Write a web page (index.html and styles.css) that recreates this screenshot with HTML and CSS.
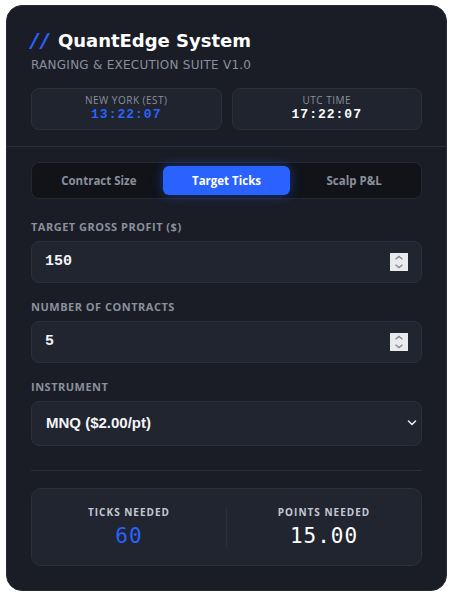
FILE: index.html
```html
<!DOCTYPE html>
<html lang="en">
<head>
<meta charset="utf-8">
<title>QuantEdge System</title>
<link rel="stylesheet" href="styles.css">
</head>
<body>
<div class="card">
  <header class="head">
    <h1 class="title"><span class="slash">//</span> QuantEdge System</h1>
    <p class="sub">RANGING &amp; EXECUTION SUITE V1.0</p>
    <div class="clocks">
      <div class="clock">
        <div class="clock-label">NEW YORK (EST)</div>
        <div class="clock-time blue">13:22:07</div>
      </div>
      <div class="clock">
        <div class="clock-label">UTC TIME</div>
        <div class="clock-time">17:22:07</div>
      </div>
    </div>
  </header>
  <main class="main">
    <div class="tabs">
      <button class="tab">Contract Size</button>
      <button class="tab active">Target Ticks</button>
      <button class="tab">Scalp P&amp;L</button>
    </div>

    <label class="field-label first" for="profit">TARGET GROSS PROFIT ($)</label>
    <div class="input-wrap">
      <input id="profit" class="field num" type="number" value="150">
      <svg class="spin" width="18" height="18" viewBox="0 0 18 18" aria-hidden="true"><rect width="18" height="18" fill="#e9e9ee"/><path d="M5.5 6.2 L9 3.4 L12.5 6.2 M5.5 11.8 L9 14.6 L12.5 11.8" fill="none" stroke="#878791" stroke-width="1.3"/></svg>
    </div>

    <label class="field-label" for="contracts">NUMBER OF CONTRACTS</label>
    <div class="input-wrap">
      <input id="contracts" class="field num" type="number" value="5">
      <svg class="spin" width="18" height="18" viewBox="0 0 18 18" aria-hidden="true"><rect width="18" height="18" fill="#e9e9ee"/><path d="M5.5 6.2 L9 3.4 L12.5 6.2 M5.5 11.8 L9 14.6 L12.5 11.8" fill="none" stroke="#878791" stroke-width="1.3"/></svg>
    </div>

    <label class="field-label" for="instrument">INSTRUMENT</label>
    <div class="select-wrap">
      <select id="instrument" class="field select">
        <option>MNQ ($2.00/pt)</option>
      </select>
      <svg class="chev" width="10" height="10" viewBox="0 0 10 10" aria-hidden="true"><path d="M1.5 3 L5 6.5 L8.5 3" fill="none" stroke="#e8eaf0" stroke-width="1.6" stroke-linecap="round" stroke-linejoin="round"/></svg>
    </div>

    <hr class="divider">

    <div class="results">
      <div class="res">
        <div class="res-label">TICKS NEEDED</div>
        <div class="res-value blue">60</div>
      </div>
      <div class="res-divider"></div>
      <div class="res">
        <div class="res-label">POINTS NEEDED</div>
        <div class="res-value">15.00</div>
      </div>
    </div>
  </main>
</div>
</body>
</html>
```

FILE: styles.css
```css
body {
  margin: 0;
  padding: 5px 6px;
  background: #ffffff;
  font-family: "DejaVu Sans", sans-serif;
}

.card {
  background: #1a1d26;
  border: 1px solid #262a35;
  border-radius: 16px;
  overflow: hidden;
}

.head {
  padding: 24px 24px 16px;
  border-bottom: 1px solid #2b2f3a;
}

.title {
  margin: 0;
  font: bold 18px/1.2 "DejaVu Sans", sans-serif;
  color: #ffffff;
}

.slash {
  font: italic bold 20px/1 "DejaVu Sans", sans-serif;
  letter-spacing: 3px;
  color: #2962ff;
}

.sub {
  margin: 6px 0 0;
  font: 12px/1.2 "DejaVu Sans", sans-serif;
  letter-spacing: 0.25px;
  color: #8a909c;
}

.clocks {
  display: grid;
  grid-template-columns: 1fr 1fr;
  gap: 10px;
  margin-top: 16px;
}

.clock {
  display: flex;
  flex-direction: column;
  gap: 1px;
  padding: 6px 0;
  background: #20242e;
  border: 1px solid #2c303c;
  border-radius: 8px;
  text-align: center;
}

.clock-label {
  font: 10px/11.4px "Open Sans", sans-serif;
  letter-spacing: 0.5px;
  color: #8a909c;
}

.clock-time {
  font: bold 13px/15.6px "Liberation Mono", monospace;
  letter-spacing: 1px;
  color: #ffffff;
}

.blue {
  color: #2962ff;
}

.main {
  padding: 15px 24px 24px;
}

.tabs {
  display: grid;
  grid-template-columns: repeat(3, 1fr);
  padding: 3px;
  background: #111318;
  border: 1px solid #242833;
  border-radius: 8px;
}

.tab {
  border: 0;
  background: none;
  padding: 6px 0;
  border-radius: 6px;
  font: bold 11.5px/17px "Open Sans", sans-serif;
  color: #8a909c;
}

.tab.active {
  background: #2962ff;
  color: #ffffff;
  box-shadow: 0 0 12px rgba(41, 98, 255, 0.45);
}

.field-label {
  display: block;
  margin: 16px 0 7px;
  font: bold 11px/15px "Open Sans", sans-serif;
  letter-spacing: 0.5px;
  color: #8a909c;
}

.field-label.first {
  margin-top: 20px;
}

.input-wrap,
.select-wrap {
  position: relative;
}

.field {
  display: block;
  box-sizing: border-box;
  width: 100%;
  height: 42px;
  margin: 0;
  background: #21252f;
  border: 1px solid #2c303c;
  border-radius: 8px;
  color: #f2f4f8;
  outline: none;
}

.num {
  padding: 0 40px 0 13px;
  font: bold 15px/18px "Liberation Mono", monospace;
  -moz-appearance: textfield;
}

.num::-webkit-inner-spin-button,
.num::-webkit-outer-spin-button {
  -webkit-appearance: none;
  margin: 0;
}

.spin {
  position: absolute;
  right: 14px;
  top: 50%;
  transform: translateY(-50%);
  pointer-events: none;
}

.select {
  height: 45px;
  padding: 0 30px 0 14px;
  appearance: none;
  -webkit-appearance: none;
  font: bold 15px/18px "Liberation Sans", sans-serif;
}

.chev {
  position: absolute;
  right: 5px;
  top: 50%;
  transform: translateY(-50%);
  pointer-events: none;
}

.divider {
  margin: 24px 0 17px;
  border: 0;
  border-top: 1px solid #2b2f3a;
  height: 0;
}

.results {
  display: grid;
  grid-template-columns: 1fr 1px 1fr;
  padding: 17px 0;
  background: #21252f;
  border: 1px solid #2c303c;
  border-radius: 10px;
  text-align: center;
}

.res-divider {
  margin: 1px 0;
  background: #2c303c;
}

.res-label {
  font: bold 10px/13.6px "Open Sans", sans-serif;
  letter-spacing: 1px;
  color: #c5c9d3;
}

.res-value {
  margin-top: 4px;
  font: 21px/1.164 "DejaVu Sans Mono", monospace;
  letter-spacing: 1px;
  color: #ffffff;
}

.res-value.blue {
  color: #2962ff;
}
```
